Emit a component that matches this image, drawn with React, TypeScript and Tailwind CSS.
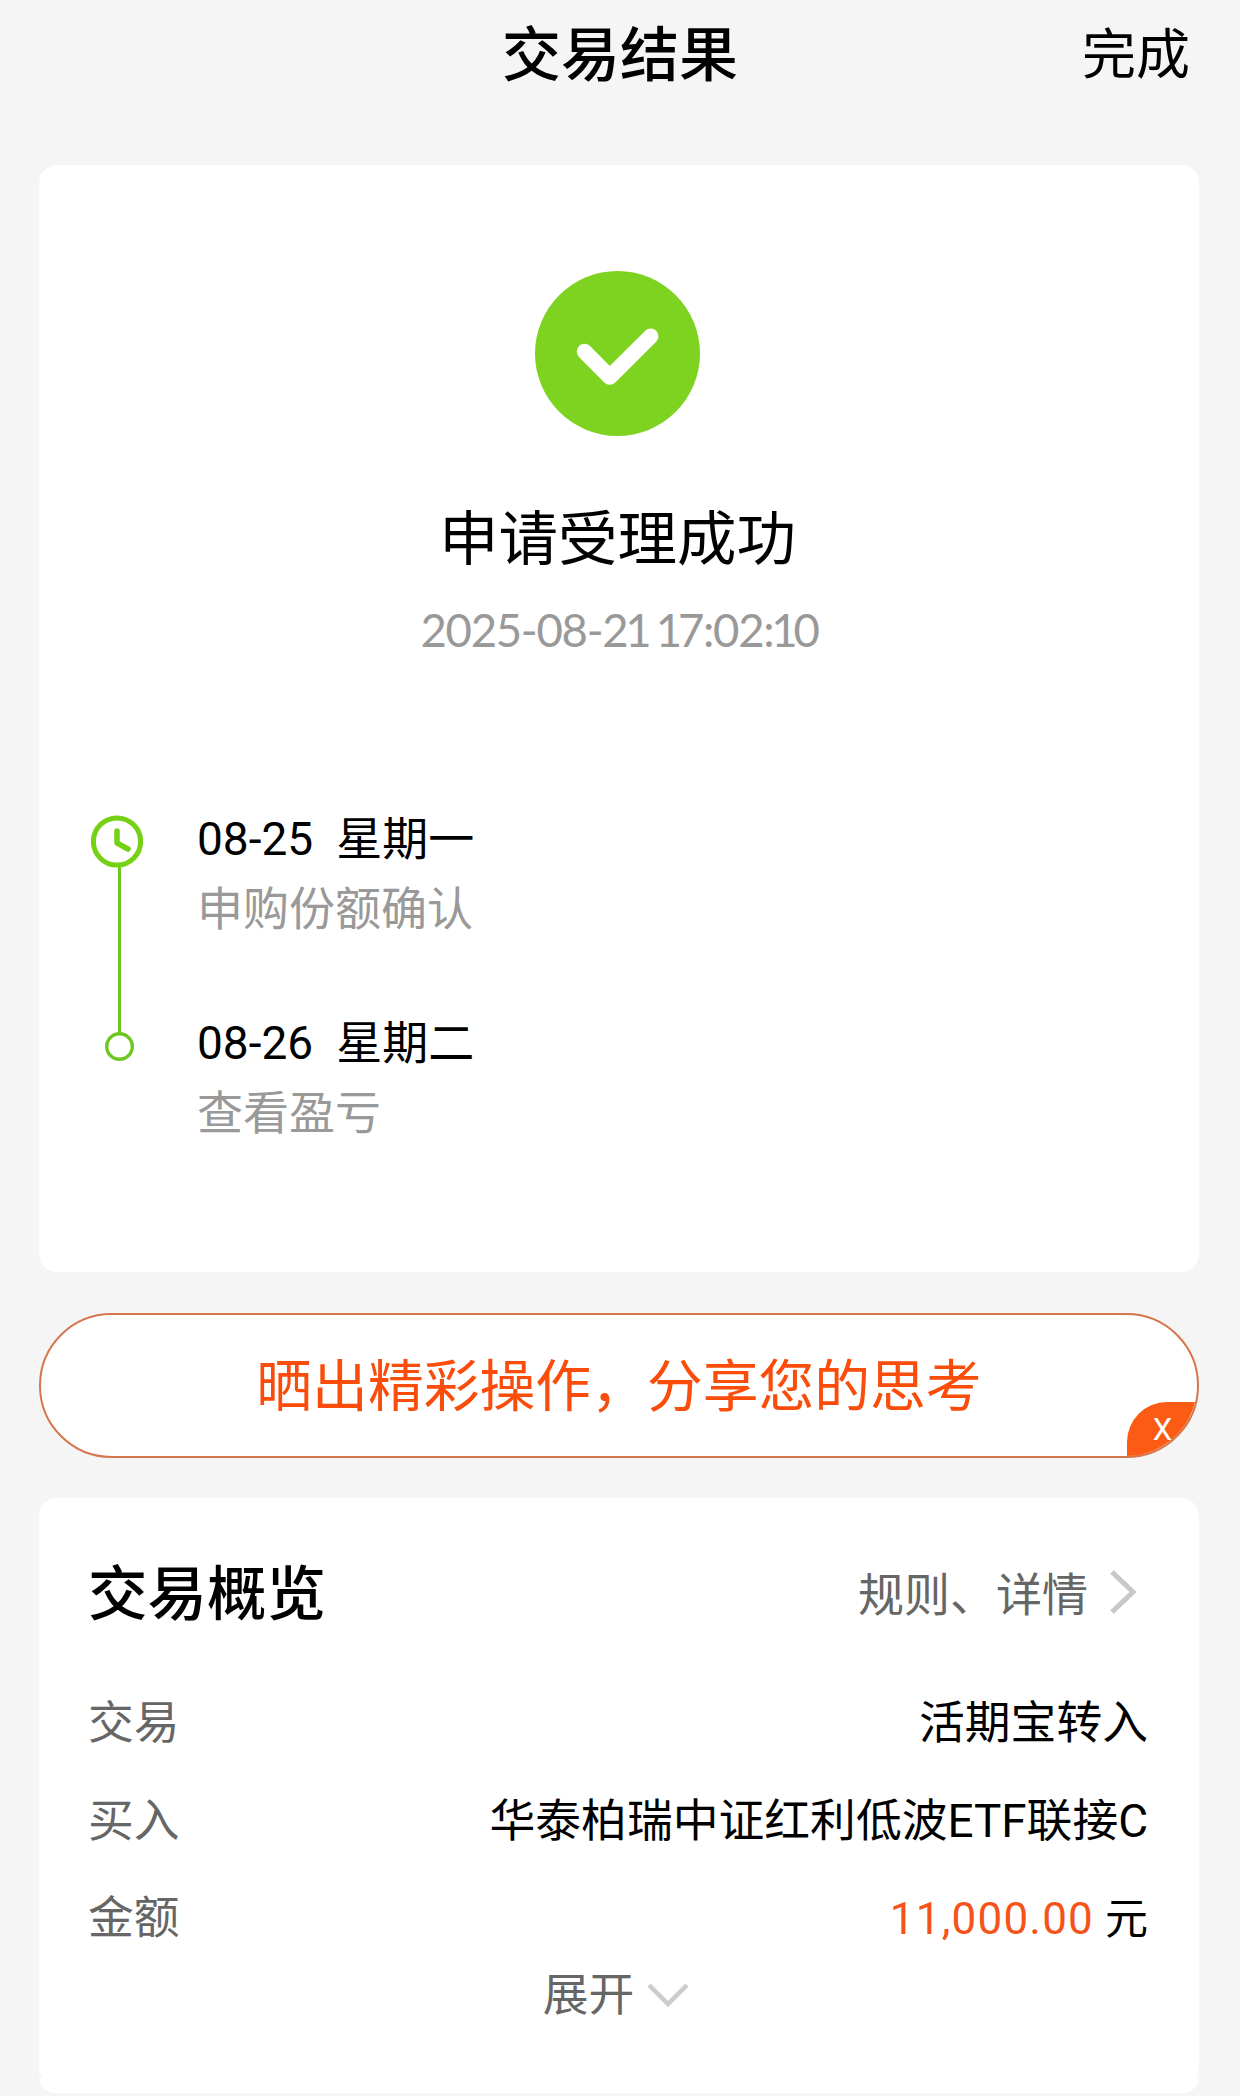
import { ReactNode } from "react";

interface TimelineStep {
  date: string;
  weekday: string;
  label: string;
}

interface SummaryRow {
  label: string;
  value: ReactNode;
}

const steps: TimelineStep[] = [
  { date: "08-25", weekday: "星期一", label: "申购份额确认" },
  { date: "08-26", weekday: "星期二", label: "查看盈亏" },
];

const rows: SummaryRow[] = [
  { label: "交易", value: "活期宝转入" },
  { label: "买入", value: "华泰柏瑞中证红利低波ETF联接C" },
  {
    label: "金额",
    value: (
      <>
        <span className="mr-[11px] text-[44px] tracking-[1.2px] text-[#f5531a]">
          11,000.00
        </span>
        <span className="text-[43px]">元</span>
      </>
    ),
  },
];

function Header() {
  return (
    <header className="grid h-[165px] grid-cols-3 items-start px-[50px] pt-[16px] leading-[80px]">
      <span />
      <h1 className="text-center text-[59px] font-medium">交易结果</h1>
      <button className="text-right text-[54px] leading-[80px]">完成</button>
    </header>
  );
}

function SuccessIcon() {
  return (
    <svg className="size-[165px]" viewBox="0 0 165 165" fill="none">
      <circle cx="82.5" cy="82.5" r="82.5" fill="#7ed321" />
      <path
        d="M49.5 80.5 74.8 106 115.7 65.3"
        stroke="#fff"
        strokeWidth="15.5"
        strokeLinecap="round"
        strokeLinejoin="round"
      />
    </svg>
  );
}

// The narrow "1" keeps the timestamp compact
function Timestamp({ value }: { value: string }) {
  return (
    <p className="mt-[15px] h-[70px] pl-[4px] text-center font-[Lato,sans-serif] text-[45.5px] leading-[70px] tracking-[-1.3px] whitespace-pre text-[#999999]">
      {value.split("").map((char, i) => (
        <span key={i} className={char === "1" ? "-mr-[3px] -ml-[2px]" : ""}>
          {char}
        </span>
      ))}
    </p>
  );
}

function TimelineRail() {
  return (
    <svg className="w-[52px] shrink-0" height="247" viewBox="0 0 52 247" fill="none">
      <path d="M28.5 52V218" stroke="#6dc720" strokeWidth="3" />
      <circle cx="26" cy="26.5" r="23.6" stroke="#74d114" strokeWidth="5" />
      <path
        d="M26 16v12l11 6"
        stroke="#74d114"
        strokeWidth="5.5"
        strokeLinecap="round"
        strokeLinejoin="round"
      />
      <circle cx="28.5" cy="231.5" r="12.8" stroke="#6dc720" strokeWidth="3.4" />
    </svg>
  );
}

function Timeline() {
  return (
    <div className="flex px-[52px] pt-[150px]">
      <TimelineRail />
      <ul className="-mt-[10px] ml-[54px]">
        {steps.map((step) => (
          <li key={step.date} className="h-[204px] text-[46px] leading-[68px]">
            <p className="flex gap-[23px]">
              <span>{step.date}</span>
              <span>{step.weekday}</span>
            </p>
            <p className="pt-[2px] text-[#999999]">{step.label}</p>
          </li>
        ))}
      </ul>
    </div>
  );
}

function ResultCard() {
  return (
    <section className="h-[1107px] rounded-[18px] bg-white pt-[106px]">
      <div className="flex flex-col items-center pr-[3px]">
        <SuccessIcon />
        <h2 className="mt-[64px] text-[59.5px] leading-[80px]">申请受理成功</h2>
        <Timestamp value="2025-08-21 17:02:10" />
      </div>
      <Timeline />
    </section>
  );
}

function ShareBanner() {
  return (
    <div className="relative mt-[41px] flex h-[145px] items-center justify-center overflow-hidden rounded-full border-2 border-[#d5764d] bg-white pt-[5px] text-[55.8px] text-[#fa4c0a]">
      <span>晒出精彩操作，分享您的思考</span>
      <button className="absolute right-0 bottom-0 h-[54px] w-[70px] rounded-tl-[40px] bg-[#fb5b14] pt-[1px] pl-[1px] text-[31px] leading-[54px] text-white">
        X
      </button>
    </div>
  );
}

function SummaryCard() {
  return (
    <>
      <section className="mt-[40px] h-[587px] rounded-[18px] bg-white pt-[55px] pr-[51px] pl-[49px]">
        <div className="flex h-[80px] items-center justify-between">
          <h2 className="pt-[5px] text-[59.5px] font-medium">交易概览</h2>
          <button className="flex items-center text-[46px] text-[#666666]">
            <span className="pt-[4px]">规则、详情</span>
            <svg className="mr-[11px] ml-[21px]" width="28" height="46" viewBox="0 0 28 46" fill="none">
              <path d="M3 2 24 22 3 42" stroke="#c8c8c8" strokeWidth="5" />
            </svg>
          </button>
        </div>
        <dl className="mt-[42px] text-[45.8px] leading-[97.5px]">
          {rows.map((row) => (
            <div key={row.label} className="flex h-[97.5px] justify-between">
              <dt className="text-[#666666]">{row.label}</dt>
              <dd>{row.value}</dd>
            </div>
          ))}
        </dl>
        <button className="mx-auto -mt-[2px] flex h-[60px] items-center pr-[4px] text-[45.8px] leading-[60px] text-[#666666]">
          展开
          <svg className="ml-[13px]" width="42" height="26" viewBox="0 0 42 26" fill="none">
            <path d="M2 2 21 21 40 2" stroke="#cccccc" strokeWidth="4.5" />
          </svg>
        </button>
      </section>
      {/* footer strip tucked under the card */}
      <div className="-mt-[8px] h-[16px] rounded-b-[16px] bg-white" />
    </>
  );
}

export default function App() {
  return (
    <div className="h-[2096px] w-[1240px] overflow-hidden bg-[#f5f5f5] font-[Roboto,'Noto_Sans_CJK_SC',sans-serif] text-black">
      <Header />
      <main className="pr-[41px] pl-[39px]">
        <ResultCard />
        <ShareBanner />
        <SummaryCard />
      </main>
    </div>
  );
}
